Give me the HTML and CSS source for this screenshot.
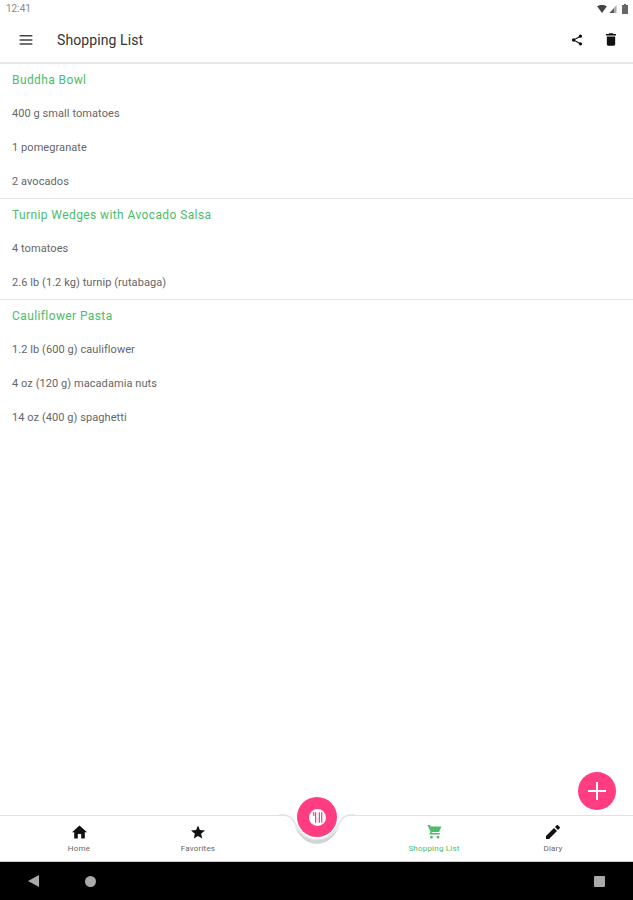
FILE: index.html
```html
<!DOCTYPE html>
<html lang="en">
<head>
    <meta charset="UTF-8">
    <meta name="viewport" content="width=device-width, initial-scale=1.0">
    <title>Shopping List</title>
    <link rel="stylesheet" href="styles.css">
</head>
<body>
    <div class="statusBar">
        <span class="clock">12:41</span>
        <div class="statusIcons">
            <svg width="10" height="8" viewBox="0 0 11 9"><path d="M0 1.500C3.200-.5 7.800-.5 11 1.500L5.500 9z" fill="#444"/></svg>
            <svg width="8" height="8" viewBox="0 0 8 9"><path d="M8 0v9H0z" fill="#aaa"/><path d="M5 4v5H0z" fill="#555"/></svg>
            <svg class="battery" width="6" height="10" viewBox="0 0 6 10"><path d="M2 0h2v1h2v9H0V1h2z" fill="#666"/></svg>
        </div>
    </div>

    <header class="toolbar">
        <svg class="menuIcon" width="14" height="10" viewBox="0 0 14 11"><path d="M0 0h14v1.600H0zM0 4.600h14v1.600H0zM0 9.200h14v1.600H0z" fill="#444"/></svg>
        <h1>Shopping List</h1>
        <div class="toolbarActions">
            <svg width="12" height="14" viewBox="0 0 14 16"><path d="M11 1.500a2 2 0 1 1 0 4 2 2 0 0 1 0-4zM3 6a2 2 0 1 1 0 4 2 2 0 0 1 0-4zM11 10.500a2 2 0 1 1 0 4 2 2 0 0 1 0-4z" fill="#111"/><path d="M11 3.500 3 8l8 4.500" stroke="#111" stroke-width="1.300" fill="none"/></svg>
            <svg width="10" height="13" viewBox="0 0 12 15"><path d="M4 0h4l1 1h3v1.700H0V1h3zM1 4h10v9.300c0 .9-.7 1.700-1.600 1.700H2.600C1.700 15 1 14.200 1 13.300z" fill="#111"/></svg>
        </div>
    </header>

    <main class="list">
        <section class="group">
            <h2>Buddha Bowl</h2>
            <div class="item">400 g small tomatoes</div>
            <div class="item">1 pomegranate</div>
            <div class="item">2 avocados</div>
        </section>
        <section class="group">
            <h2>Turnip Wedges with Avocado Salsa</h2>
            <div class="item">4 tomatoes</div>
            <div class="item">2.6 lb (1.2 kg) turnip (rutabaga)</div>
        </section>
        <section class="group">
            <h2>Cauliflower Pasta</h2>
            <div class="item">1.2 lb (600 g) cauliflower</div>
            <div class="item">4 oz (120 g) macadamia nuts</div>
            <div class="item">14 oz (400 g) spaghetti</div>
        </section>
    </main>

    <button class="fab addFab">
        <svg width="18" height="18" viewBox="0 0 18 18"><path d="M8 0h2v8h8v2h-8v8H8v-8H0V8h8z" fill="#fff"/></svg>
    </button>

    <nav class="bottomNav">
        <a class="navItem">
            <svg width="15" height="13" viewBox="0 0 15 13"><path d="M7.500 0 15 6.700h-2.200V13H9.200V8.500H5.800V13H2.200V6.700H0z" fill="#111"/></svg>
            <span>Home</span>
        </a>
        <a class="navItem">
            <svg width="14" height="13" viewBox="0 0 14 13"><path d="m7 0 1.900 4.600 5.100.4-3.900 3.300 1.200 4.700L7 10.500 2.700 13l1.200-4.700L0 5l5.100-.4z" fill="#111"/></svg>
            <span>Favorites</span>
        </a>
        <div class="navGap"></div>
        <a class="navItem active">
            <svg width="15" height="15" viewBox="0 0 15 15"><path d="M0 0h2.600l.7 1.500H15l-2.600 6H4.800l-.6 1.200h8.900v1.400H1.900l1.400-2.800zM4.300 11.500a1.500 1.500 0 1 1 0 3 1.500 1.500 0 0 1 0-3zM11.300 11.500a1.500 1.500 0 1 1 0 3 1.500 1.500 0 0 1 0-3z" fill="#4cbb6c"/></svg>
            <span>Shopping List</span>
        </a>
        <a class="navItem lastItem">
            <svg width="14" height="14" viewBox="0 0 14 14"><path d="M0 11v3h3l8-8-3-3zM9 2l3 3 1.700-1.700c.4-.4.4-1 0-1.300L12 .3c-.4-.4-1-.4-1.300 0z" fill="#111"/></svg>
            <span>Diary</span>
        </a>
    </nav>

    <!-- curved notch under the centre button -->
    <svg class="notch" width="76" height="36" viewBox="0 0 76 36">
        <path d="M0 1h4c8 0 10 5 14 12 4 7 11 13 20 13s16-6 20-13c4-7 6-12 14-12h4V0H0z" fill="#fff"/>
        <path d="M0 1h4c8 0 10 5 14 12 4 7 11 13 20 13s16-6 20-13c4-7 6-12 14-12h4" fill="none" stroke="#e2e2e2" stroke-width="1.500"/>
        <path d="M15 11c4 10 12 19 23 19s19-9 23-19c-4 7-11 15-23 15S19 18 15 11z" fill="#d4d4d4"/>
    </svg>
    <button class="fab centerFab">
        <svg width="17" height="17" viewBox="0 0 18 18"><circle cx="9" cy="9" r="9" fill="#fff"/><path d="M5 3.500v4M7 3.500v11M11 3.500v11M13.500 3.500v11" stroke="#ff3d80" stroke-width="1.300"/></svg>
    </button>

    <div class="systemBar">
        <svg width="11" height="12" viewBox="0 0 11 12"><path d="M11 0v12L0 6z" fill="#aaa"/></svg>
        <span class="homeDot"></span>
        <span class="recentSquare"></span>
    </div>
</body>
</html>
```

FILE: styles.css
```css
html, body {
    height: 100%;
}
body {
    font-family: 'Roboto', sans-serif;
    background-color: #fff;
    color: #333;
    margin: 0;
    height: 900px;
    display: flex;
    flex-direction: column;
    position: relative;
    overflow: hidden;
}
.statusBar {
    height: 17px;
    display: flex;
    justify-content: space-between;
    align-items: center;
    padding: 0 5px 0 6px;
    flex-shrink: 0;
}
.clock {
    font-size: 10px;
    color: #888;
}
.statusIcons {
    display: flex;
    align-items: center;
    gap: 2px;
}
.battery {
    margin-left: 3px;
}
.toolbar {
    height: 45px;
    display: flex;
    align-items: center;
    border-bottom: 2px solid #e8e8e8;
    flex-shrink: 0;
}
.menuIcon {
    margin-left: 19px;
}
.toolbar h1 {
    margin: 0 0 0 24px;
    font-size: 14px;
    font-weight: 400;
    letter-spacing: 0.1px;
    color: #333;
}
.toolbarActions {
    margin-left: auto;
    margin-right: 17px;
    display: flex;
    align-items: center;
    gap: 23px;
}
.list {
    flex: 1;
}
.group {
    border-bottom: 1px solid #e8e8e8;
}
.group:last-child {
    border-bottom: none;
}
.group h2 {
    margin: 0;
    padding-left: 12px;
    height: 32px;
    line-height: 32px;
    font-size: 12px;
    font-weight: 400;
    letter-spacing: 0.4px;
    color: #4cbb6c;
}
.item {
    padding-left: 12px;
    height: 34px;
    line-height: 36px;
    font-size: 11px;
    letter-spacing: 0.07px;
    color: #666;
}
.fab {
    position: absolute;
    border: none;
    padding: 0;
    border-radius: 50%;
    background: #ff3d80;
    display: flex;
    align-items: center;
    justify-content: center;
}
.addFab {
    left: 578px;
    top: 772px;
    width: 38px;
    height: 38px;
}
.centerFab {
    left: 297px;
    top: 797px;
    width: 40px;
    height: 40px;
}
.notch {
    position: absolute;
    left: 279px;
    top: 814px;
}
.bottomNav {
    height: 45px;
    border-top: 1px solid #e2e2e2;
    border-bottom: 1px solid #ccc;
    background: #fff;
    display: flex;
    flex-shrink: 0;
}
.navItem {
    width: 118px;
    display: flex;
    flex-direction: column;
    align-items: center;
    padding-top: 9px;
    font-size: 8px;
    letter-spacing: 0.2px;
    color: #666;
    gap: 5px;
}
.navItem svg {
    height: 14px;
}
.navItem.active {
    color: #4cbb6c;
}
.navGap {
    width: 118px;
}
.navItem:nth-child(1) {
    margin-left: 20px;
}
.navItem:nth-child(2) {
    margin-left: 1px;
}
.lastItem {
    margin-left: 1px;
}
.systemBar {
    height: 38px;
    background: #000;
    display: flex;
    align-items: center;
    flex-shrink: 0;
    padding-left: 28px;
}
.homeDot {
    width: 11px;
    height: 11px;
    border-radius: 50%;
    background: #aaa;
    margin-left: 46px;
}
.recentSquare {
    width: 11px;
    height: 11px;
    border-radius: 1px;
    background: #aaa;
    margin-left: auto;
    margin-right: 28px;
}
```
